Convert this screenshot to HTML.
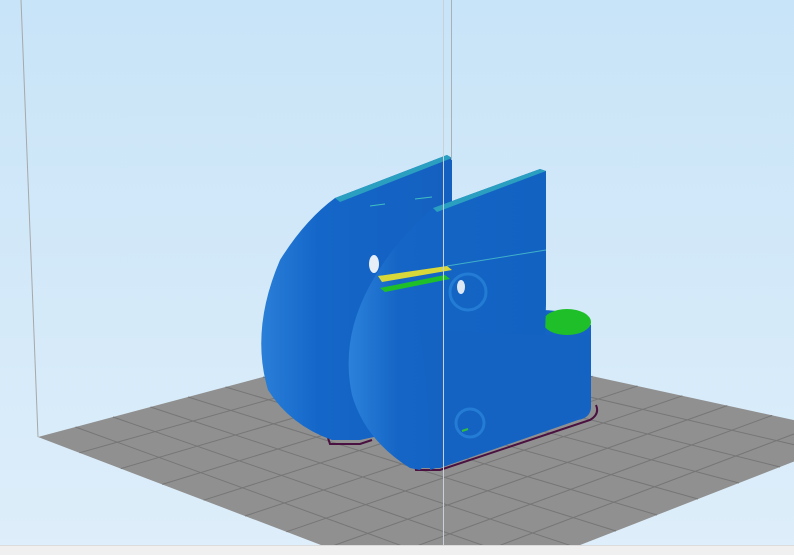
<!DOCTYPE html>
<html><head><meta charset="utf-8"><style>
html,body{margin:0;padding:0;width:794px;height:555px;overflow:hidden;background:#cfe6f8}
svg{display:block}
</style></head><body>
<svg width="794" height="555" viewBox="0 0 794 555" xmlns="http://www.w3.org/2000/svg">
<defs>
<linearGradient id="bg" x1="0" y1="0" x2="0" y2="1">
<stop offset="0" stop-color="#c8e4f8"/><stop offset="1" stop-color="#deeefa"/>
</linearGradient>
<linearGradient id="blue" x1="0" y1="0" x2="1" y2="0">
<stop offset="0" stop-color="#2a7fd8"/><stop offset="0.3" stop-color="#1466c8"/><stop offset="1" stop-color="#1460c0"/>
</linearGradient>
<linearGradient id="blue2" x1="0" y1="0" x2="1" y2="0">
<stop offset="0" stop-color="#2b82da"/><stop offset="0.25" stop-color="#1565c6"/><stop offset="1" stop-color="#1262c2"/>
</linearGradient>
<clipPath id="c"><rect width="794" height="545"/></clipPath>
</defs>
<rect width="794" height="555" fill="url(#bg)"/>
<!-- bed -->
<g clip-path="url(#c)">
<polygon points="38,437 413,337 862,435 452,595" fill="#909090"/>
<g stroke="#767676" stroke-width="1" fill="none">
<line x1="75.5" y1="427" x2="493" y2="579"/><line x1="113" y1="417" x2="534" y2="563"/>
<line x1="150.5" y1="407" x2="575" y2="547"/><line x1="188" y1="397" x2="616" y2="531"/>
<line x1="225.5" y1="387" x2="657" y2="515"/><line x1="263" y1="377" x2="698" y2="499"/>
<line x1="300.5" y1="367" x2="739" y2="483"/><line x1="338" y1="357" x2="780" y2="467"/>
<line x1="375.5" y1="347" x2="821" y2="451"/>
<line x1="79.4" y1="452.8" x2="457.9" y2="346.8"/><line x1="120.8" y1="468.6" x2="502.8" y2="356.6"/>
<line x1="162.2" y1="484.4" x2="547.7" y2="366.4"/><line x1="203.6" y1="500.2" x2="592.6" y2="376.2"/>
<line x1="245" y1="516" x2="637.5" y2="386"/><line x1="286.4" y1="531.8" x2="682.4" y2="395.8"/>
<line x1="327.8" y1="547.6" x2="727.3" y2="405.6"/><line x1="369.2" y1="563.4" x2="772.2" y2="415.4"/>
<line x1="410.6" y1="579.2" x2="817.1" y2="425.2"/>
</g>
</g>
<rect x="0" y="545" width="794" height="10" fill="#f0f0f0"/>
<line x1="0" y1="545.5" x2="794" y2="545.5" stroke="#dcdcdc"/>
<!-- purple skirts -->
<path d="M328,438 L330,444 L360,444 L372,440" stroke="#4a1040" stroke-width="2" fill="none"/>
<path d="M414,462 L416,470 L440,470 L590,420 Q600,414 596,405" stroke="#4a1040" stroke-width="2" fill="none"/>
<!-- fin 1 (back) -->
<path d="M335,198 L447,155 L452,158 L452,420 L360,440 L332,440 Q290,425 268,390 Q250,330 280,260 Q305,220 335,198 Z" fill="url(#blue)"/>
<path d="M335,198 L447,155 L452,158 L340,202 Z" fill="#2a9fc0"/>
<!-- base block -->
<path d="M540,310 Q575,310 591,325 L591,408 Q590,418 578,420 L440,468 L420,468 L420,320 Z" fill="#1563c4"/>
<ellipse cx="567" cy="322" rx="24" ry="13" fill="#1fbf2a"/>
<!-- fin 2 (front) -->
<path d="M433,208 L540,169 L546,171 L546,305 L545,335 L540,336 L420,470 L410,468 Q365,440 352,395 Q340,340 370,285 Q395,240 433,208 Z" fill="url(#blue2)"/>
<path d="M433,208 L540,169 L546,171 L437,212 Z" fill="#2a9fc0"/>
<path d="M420,330 Q430,400 430,470 L560,425 L590,410 L591,335 L546,335 Z" fill="#1462c2"/>
<!-- holes and highlights -->
<ellipse cx="374" cy="264" rx="5" ry="9" fill="#e6eef8"/>
<polygon points="378,276 447,266 452,270 382,282" fill="#d8d83a"/>
<polygon points="380,288 445,275 450,279 385,292" fill="#1fbf2a"/>
<ellipse cx="461" cy="287" rx="4" ry="7" fill="#dde8f4"/>
<circle cx="468" cy="292" r="18" fill="none" stroke="#2f8ee0" stroke-width="3" opacity="0.6"/>
<circle cx="470" cy="423" r="14" fill="none" stroke="#2f8ee0" stroke-width="3" opacity="0.6"/>
<line x1="462" y1="431" x2="468" y2="429" stroke="#30c040" stroke-width="2"/>
<line x1="370" y1="206" x2="385" y2="204" stroke="#40c0c0" stroke-width="1"/>
<line x1="415" y1="199" x2="432" y2="197" stroke="#40c0c0" stroke-width="1"/>
<line x1="447" y1="266" x2="546" y2="250" stroke="#40b0c8" stroke-width="1"/>
<!-- frame lines -->
<line x1="21" y1="0" x2="38" y2="437" stroke="#a8a8a8" stroke-width="1"/>
<line x1="443.5" y1="0" x2="443.5" y2="545" stroke="#c8d0d8" stroke-width="1"/>
<line x1="451.5" y1="0" x2="451.5" y2="160" stroke="#a8b0b8" stroke-width="1"/>
</svg>
</body></html>
